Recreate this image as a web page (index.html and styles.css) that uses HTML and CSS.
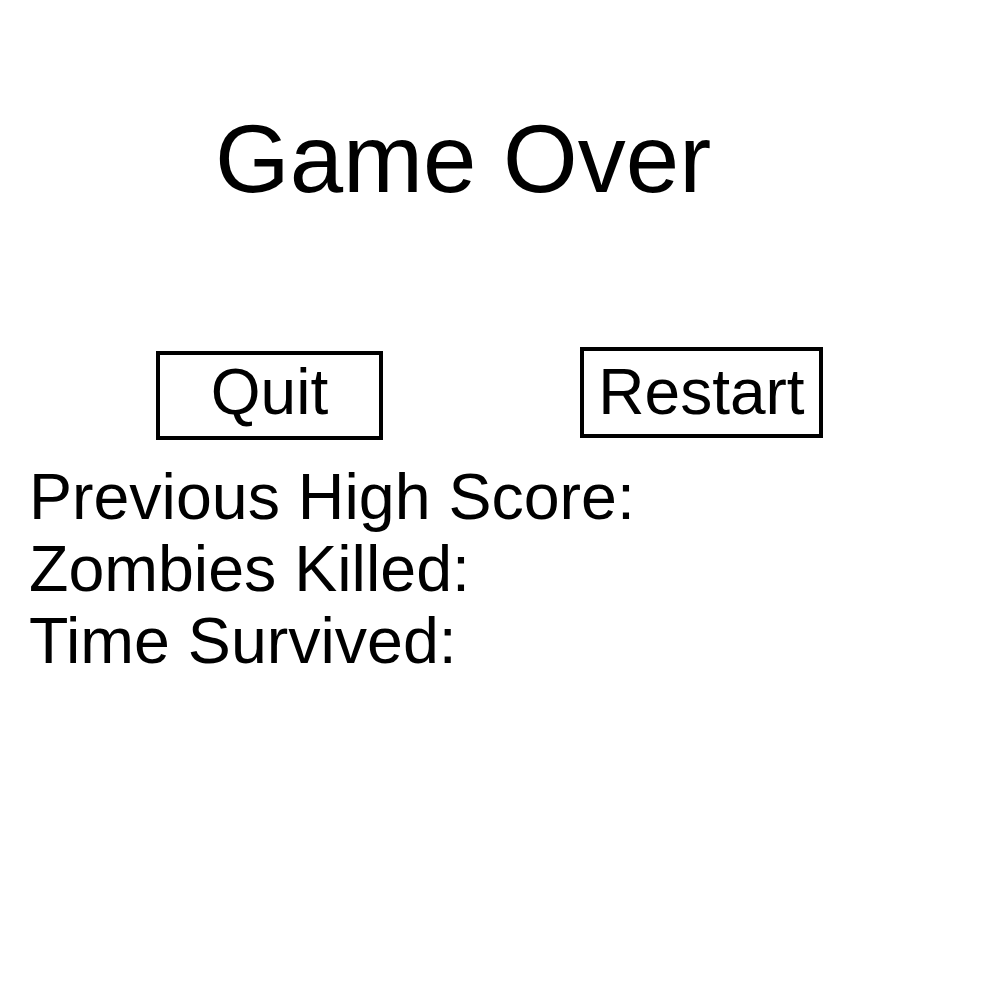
FILE: index.html
```html
<!DOCTYPE html>
<html>
<head>
<meta charset="utf-8">
<title>Game Over</title>
<link rel="stylesheet" href="styles.css">
</head>
<body>
<div class="screen">
  <h1 class="title">Game Over</h1>
  <div class="buttons">
    <button class="btn btn-quit">Quit</button>
    <button class="btn btn-restart">Restart</button>
  </div>
  <div class="stats">
    <div class="stat">Previous High Score:</div>
    <div class="stat">Zombies Killed:</div>
    <div class="stat">Time Survived:</div>
  </div>
</div>
</body>
</html>
```
FILE: styles.css
```css
html, body {
  margin: 0;
  padding: 0;
  background: #ffffff;
}
.screen {
  width: 1000px;
  height: 1000px;
  font-family: "Liberation Sans", Arial, sans-serif;
  color: #000000;
}
.title {
  margin: 0;
  padding: 104px 0 0 215px;
  font-size: 96px;
  font-weight: normal;
  line-height: 110px;
}
.buttons {
  display: flex;
  align-items: flex-start;
  margin-top: 133px;
}
.btn {
  box-sizing: border-box;
  background: #ffffff;
  border: 4px solid #000000;
  font-family: "Liberation Sans", Arial, sans-serif;
  font-size: 64px;
  line-height: 74px;
  color: #000000;
  text-align: center;
  padding: 0;
  margin: 0;
  display: flex;
  justify-content: center;
  align-items: flex-start;
}
.btn-quit {
  margin-top: 4px;
  margin-left: 156px;
  width: 227px;
  height: 89px;
  padding-top: 0;
}
.btn-restart {
  margin-left: 197px;
  width: 243px;
  height: 91px;
  padding-top: 4px;
}
.stats {
  margin-top: 21px;
  padding-left: 29px;
}
.stat {
  font-size: 64.5px;
  line-height: 72px;
}
```
